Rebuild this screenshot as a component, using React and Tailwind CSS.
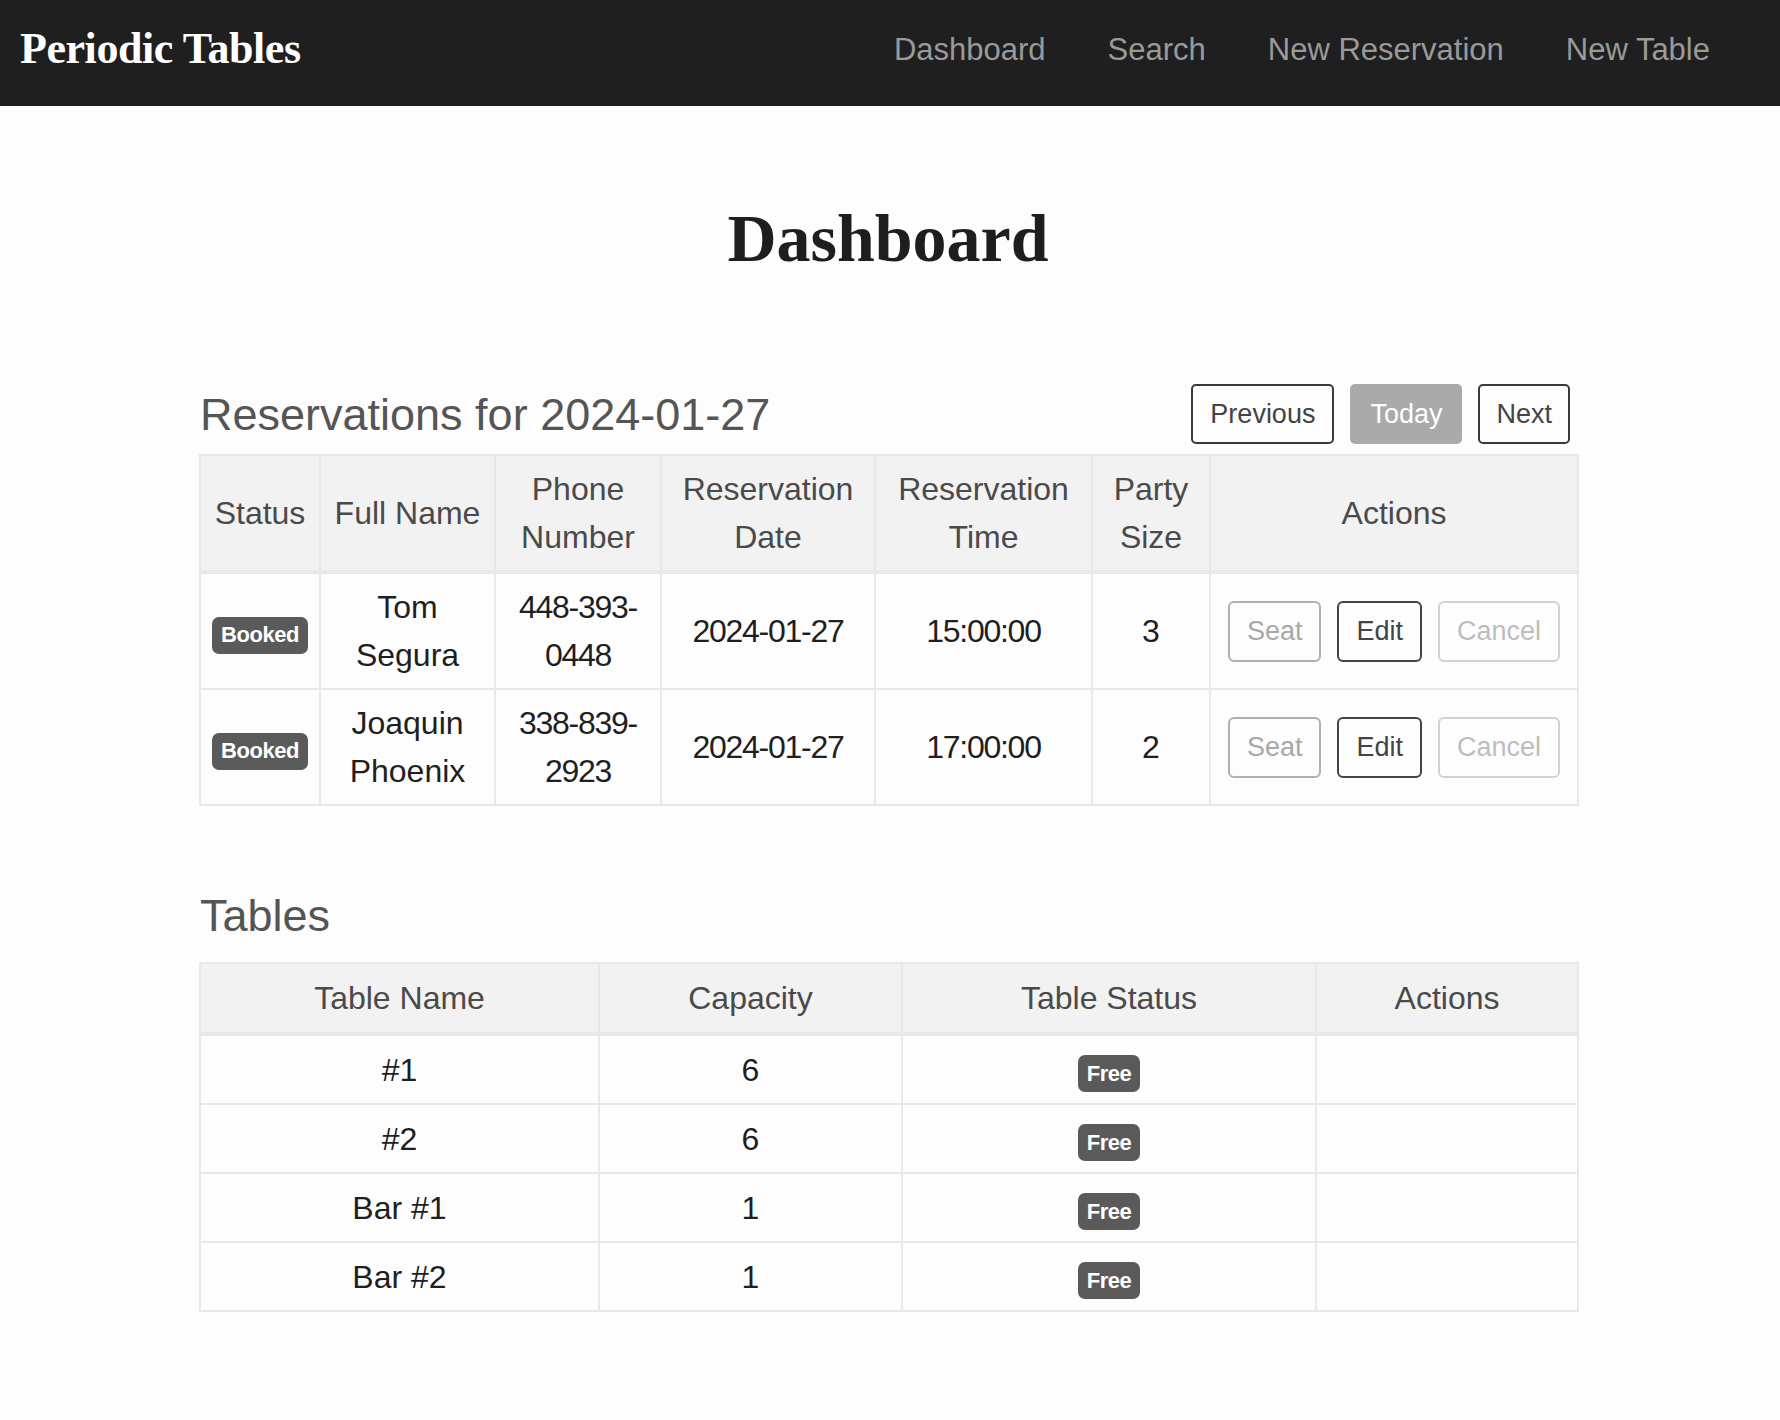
import React from 'react';

const SANS = { fontFamily: '"Liberation Sans", Arial, sans-serif' };

const reservations = [
  { first: 'Tom', last: 'Segura', phoneA: '448-393-', phoneB: '0448', date: '2024-01-27', time: '15:00:00', people: 3 },
  { first: 'Joaquin', last: 'Phoenix', phoneA: '338-839-', phoneB: '2923', date: '2024-01-27', time: '17:00:00', people: 2 },
];

const tables = [
  { name: '#1', capacity: 6 },
  { name: '#2', capacity: 6 },
  { name: 'Bar #1', capacity: 1 },
  { name: 'Bar #2', capacity: 1 },
];

const th = 'border-2 border-[#e8e8e8] border-b-4 bg-[#f2f2f2] px-[10px] py-[9px] text-center align-middle font-normal text-[32px] leading-[48px] text-[#4a4a4a]';
const td = 'border-2 border-[#e8e8e8] px-[10px] py-[9px] text-center align-middle text-[32px] leading-[48px] text-[#1f1f1f]';
const th2 = 'border-2 border-[#e8e8e8] border-b-4 bg-[#f2f2f2] px-[10px] py-[10px] text-center align-middle font-normal text-[32px] leading-[48px] text-[#4a4a4a]';
const td2 = 'border-2 border-[#e8e8e8] px-[10px] py-[9.5px] text-center align-middle text-[32px] leading-[48px] text-[#1f1f1f]';

const Badge = ({ children }) => (
  <span className="inline-flex h-[37px] items-center rounded-[7px] bg-[#5a5a5a] px-[9px] text-[22px] font-bold leading-none tracking-[-0.02em] text-white">
    {children}
  </span>
);

const App = () => {
  return (
    <div className="min-h-screen bg-[#fdfdfd] pb-[110px]" style={SANS}>
      {/* Navbar */}
      <nav className="flex h-[106px] items-center justify-between bg-[#1f1f1f] pb-[8px] pl-[20px] pr-[70px]">
        <span className="font-['Liberation_Serif',serif] text-[44px] font-bold leading-none tracking-[-0.01em] text-white">
          Periodic Tables
        </span>
        <div className="flex gap-[62px] text-[31px] leading-none text-[#9a9a9a]">
          <a href="#">Dashboard</a>
          <a href="#">Search</a>
          <a href="#">New Reservation</a>
          <a href="#">New Table</a>
        </div>
      </nav>

      <main className="ml-[199px] w-[1378px]">
        <h1 className="mt-[91px] h-[82px] text-center font-['Liberation_Serif',serif] text-[68px] font-bold leading-[82px] text-[#1e1e1e]">
          Dashboard
        </h1>

        {/* Reservations */}
        <div className="mt-[105px] flex h-[60px] items-center justify-between pr-[7px]">
          <h2 className="pl-[1px] text-[45px] leading-none text-[#555]">Reservations for 2024-01-27</h2>
          <div className="flex gap-[16px] text-[27px]">
            <button className="h-[60px] rounded-[5px] border-2 border-[#3a3a3a] px-[17px] text-[#444]">Previous</button>
            <button className="h-[60px] rounded-[5px] border-2 border-[#aaaaaa] bg-[#aaaaaa] px-[18px] text-white">Today</button>
            <button className="h-[60px] rounded-[5px] border-2 border-[#3a3a3a] px-[16px] text-[#444]">Next</button>
          </div>
        </div>

        <table className="mt-[10px] w-full table-fixed border-collapse">
          <colgroup>
            <col className="w-[120px]" />
            <col className="w-[175px]" />
            <col className="w-[166px]" />
            <col className="w-[214px]" />
            <col className="w-[217px]" />
            <col className="w-[118px]" />
            <col className="w-[368px]" />
          </colgroup>
          <thead>
            <tr>
              <th className={th}>Status</th>
              <th className={th}>Full Name</th>
              <th className={th}>Phone<br />Number</th>
              <th className={th}>Reservation<br />Date</th>
              <th className={th}>Reservation<br />Time</th>
              <th className={th}>Party<br />Size</th>
              <th className={th}>Actions</th>
            </tr>
          </thead>
          <tbody>
            {reservations.map((r) => (
              <tr key={r.last}>
                <td className={td}><Badge>Booked</Badge></td>
                <td className={td}>{r.first}<br />{r.last}</td>
                <td className={`${td} tracking-[-0.04em]`}>{r.phoneA}<br />{r.phoneB}</td>
                <td className={`${td} tracking-[-0.04em]`}>{r.date}</td>
                <td className={`${td} tracking-[-0.04em]`}>{r.time}</td>
                <td className={td}>{r.people}</td>
                <td className={td}>
                  <div className="flex justify-center gap-[16px] text-[27px]">
                    <button className="h-[61px] rounded-[6px] border-2 border-[#b0b0b0] px-[17px] text-[#a8a8a8]">Seat</button>
                    <button className="h-[61px] rounded-[6px] border-2 border-[#444] px-[17px] text-[#444]">Edit</button>
                    <button className="h-[61px] rounded-[6px] border-2 border-[#d2d2d2] px-[17px] text-[#bdbdbd]">Cancel</button>
                  </div>
                </td>
              </tr>
            ))}
          </tbody>
        </table>

        {/* Tables */}
        <h2 className="mt-[80px] h-[60px] pl-[1px] text-[45px] leading-[60px] text-[#555]">Tables</h2>

        <table className="mt-[16px] w-full table-fixed border-collapse">
          <colgroup>
            <col className="w-[399px]" />
            <col className="w-[303px]" />
            <col className="w-[414px]" />
            <col className="w-[262px]" />
          </colgroup>
          <thead>
            <tr>
              <th className={th2}>Table Name</th>
              <th className={th2}>Capacity</th>
              <th className={th2}>Table Status</th>
              <th className={th2}>Actions</th>
            </tr>
          </thead>
          <tbody>
            {tables.map((t) => (
              <tr key={t.name}>
                <td className={td2}>{t.name}</td>
                <td className={td2}>{t.capacity}</td>
                <td className={td2}><Badge>Free</Badge></td>
                <td className={td2}></td>
              </tr>
            ))}
          </tbody>
        </table>
      </main>
    </div>
  );
};

export default App;
